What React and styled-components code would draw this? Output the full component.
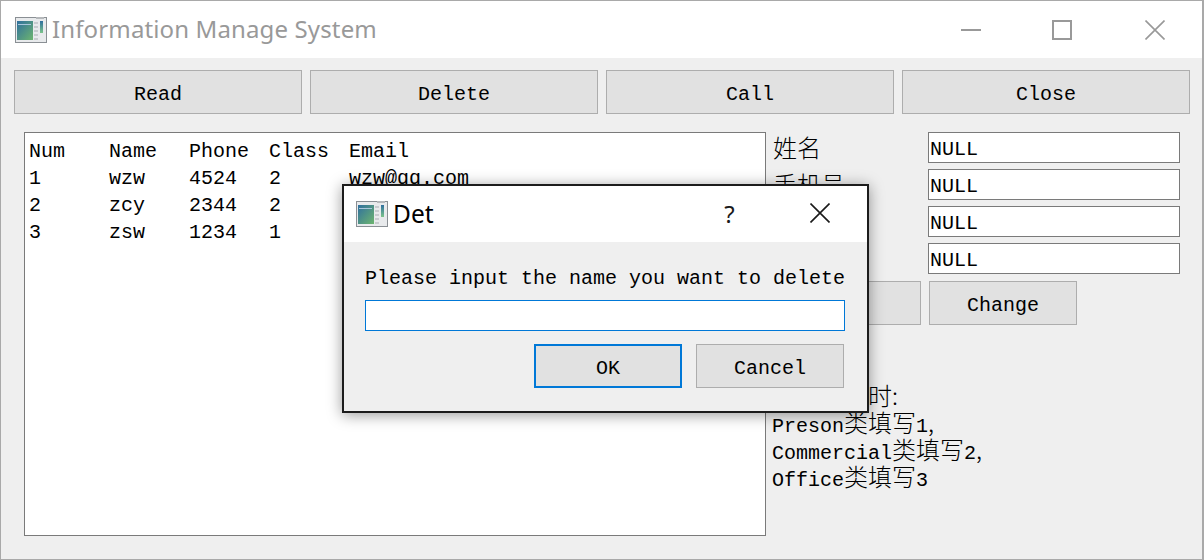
import React from 'react';
import styled, { createGlobalStyle } from 'styled-components';

const GlobalStyle = createGlobalStyle`
  html, body {
    margin: 0;
    padding: 0;
    background: #efefef;
  }
  * {
    box-sizing: border-box;
  }
`;

const mono = `"Liberation Mono", "Noto Sans CJK SC", monospace`;
const ui = `"Noto Sans", "Open Sans", sans-serif`;

const Janela = styled.div`
  position: relative;
  width: 1204px;
  height: 560px;
  background: #efefef;
  border: 1px solid #a9a9a9;
  border-right-width: 2px;
  overflow: hidden;
  font-family: ${mono};
  font-size: 20px;
  color: #000;
`;

const BarraTitulo = styled.div`
  display: flex;
  align-items: center;
  height: 57px;
  background: #fff;
  padding-left: 14px;
`;

const TituloJanela = styled.div`
  flex: 1;
  margin: -2px 0 0 5px;
  font-family: ${ui};
  font-size: 24px;
  letter-spacing: 0.13px;
  color: #999;
  white-space: nowrap;
`;

const BotaoJanela = styled.div`
  display: flex;
  align-items: center;
  justify-content: center;
  width: 92px;
  height: 57px;
  padding-right: ${p => p.$folga || 3}px;
`;

const Corpo = styled.div`
  display: flex;
  flex-direction: column;
  padding: 12px 12px 0 13px;
`;

const BarraBotoes = styled.div`
  display: flex;
  gap: 8px;
`;

const Botao = styled.div`
  display: flex;
  align-items: center;
  justify-content: center;
  flex: ${p => (p.$largo ? '1' : 'none')};
  width: ${p => (p.$largo ? 'auto' : '148px')};
  height: 44px;
  background: #e1e1e1;
  border: ${p => (p.$foco ? '2px solid #0078d7' : '1px solid #adadad')};
  padding-top: 4px;
`;

const Conteudo = styled.div`
  display: flex;
  margin-top: 18px;
  padding-left: 10px;
`;

const AreaTexto = styled.div`
  width: 742px;
  height: 404px;
  flex: none;
  background: #fff;
  border: 1px solid #7a7a7a;
  padding: 5px 4px;
  line-height: 27px;
`;

const Linha = styled.div`
  display: grid;
  grid-template-columns: repeat(4, 80px) auto;
  height: 27px;
`;

const Lateral = styled.div`
  display: flex;
  flex-direction: column;
  width: 414px;
  padding-left: 7px;
`;

const Campo = styled.div`
  display: flex;
  align-items: center;
  height: 31px;
  margin-bottom: 6px;
`;

const Rotulo = styled.div`
  width: 155px;
  flex: none;
  padding-top: 2px;
`;

const Entrada = styled.div`
  width: 252px;
  height: 31px;
  background: #fff;
  border: 1px solid #7a7a7a;
  padding-left: 1px;
  line-height: 34px;
`;

const LinhaBotoes = styled.div`
  display: flex;
  gap: 8px;
  margin-top: 1px;
`;

const Observacao = styled.div`
  margin: 58px 0 0 -1px;
`;

const LinhaObservacao = styled.div`
  height: 27px;
  line-height: 27px;
  padding-left: ${p => p.$recuo || 0}px;
  white-space: nowrap;
`;

const Han = styled.span`
  font-family: "Noto Sans CJK SC", sans-serif;
  font-size: 24px;
  font-weight: 300;
  line-height: 1;
`;

const Dialogo = styled.div`
  position: absolute;
  left: 341px;
  top: 183px;
  width: 527px;
  height: 229px;
  background: #efefef;
  border: 2px solid #1c1c1c;
  box-shadow: 0 2px 14px rgba(0, 0, 0, 0.4);
`;

const BarraDialogo = styled.div`
  display: flex;
  align-items: center;
  height: 56px;
  background: #fff;
  padding-left: 12px;
`;

const TituloDialogo = styled.div`
  flex: 1;
  margin: -2px 0 0 5px;
  font-family: ${ui};
  font-size: 24.5px;
  color: #000;
`;

const Ajuda = styled.div`
  width: 92px;
  margin: -2px 0 0 0;
  padding-right: 3px;
  text-align: center;
  font-family: ${ui};
  font-size: 24px;
  color: #1a1a1a;
`;

const FecharDialogo = styled.div`
  display: flex;
  align-items: center;
  justify-content: center;
  width: 90px;
  padding: 0 5px 2px 0;
`;

const CorpoDialogo = styled.div`
  display: flex;
  flex-direction: column;
  padding: 22px 21px 0 21px;
`;

const Pergunta = styled.div`
  height: 36px;
  line-height: 29px;
  white-space: nowrap;
`;

const EntradaDialogo = styled.div`
  width: 480px;
  height: 31px;
  background: #fff;
  border: 1px solid #0078d7;
`;

const AcoesDialogo = styled.div`
  display: flex;
  justify-content: flex-end;
  gap: 14px;
  margin-top: 13px;
  padding-right: 2px;
`;

const IconeApp = () => (
  <svg width="32" height="26" viewBox="0 0 32 26" style={{ flex: 'none' }}>
    <defs>
      <linearGradient id="tela" x1="0" y1="0" x2="1" y2="1">
        <stop offset="0" stopColor="#2f6f9e" />
        <stop offset="1" stopColor="#6db56f" />
      </linearGradient>
      <linearGradient id="faixa" x1="0" y1="0" x2="0" y2="1">
        <stop offset="0" stopColor="#2f6f9e" />
        <stop offset="1" stopColor="#7cc48a" />
      </linearGradient>
    </defs>
    <rect x="0.5" y="0.5" width="31" height="25" fill="#e8eaec" stroke="#8a8f94" />
    <rect x="21" y="0" width="8" height="2" fill="#b5b8bb" />
    <rect x="2" y="4" width="16" height="19" fill="url(#tela)" />
    <rect x="3" y="7" width="13" height="1" fill="#a9c6dc" />
    <rect x="25" y="4" width="3" height="12" fill="url(#faixa)" />
    <path d="M19 6h4M19 10h4M19 14h4M19 18h4M19 22h4" stroke="#a8adb2" strokeWidth="1" />
  </svg>
);

const Xis = ({ cor, tamanho }) => (
  <svg width={tamanho} height={tamanho} viewBox="0 0 20 20">
    <path d="M0.5 0.5L19.5 19.5M19.5 0.5L0.5 19.5" stroke={cor} strokeWidth="1.6" fill="none" />
  </svg>
);

const linhas = [
  ['Num', 'Name', 'Phone', 'Class', 'Email'],
  ['1', 'wzw', '4524', '2', 'wzw@qq.com'],
  ['2', 'zcy', '2344', '2', ''],
  ['3', 'zsw', '1234', '1', ''],
];

const App = () => (
  <Janela>
    <GlobalStyle />
    <BarraTitulo>
      <IconeApp />
      <TituloJanela>Information Manage System</TituloJanela>
      <BotaoJanela>
        <svg width="20" height="2" viewBox="0 0 20 2">
          <rect width="20" height="2" fill="#999" />
        </svg>
      </BotaoJanela>
      <BotaoJanela $folga={5}>
        <svg width="20" height="20" viewBox="0 0 20 20">
          <rect x="1" y="1" width="18" height="18" fill="none" stroke="#999" strokeWidth="2" />
        </svg>
      </BotaoJanela>
      <BotaoJanela>
        <Xis cor="#999" tamanho={20} />
      </BotaoJanela>
    </BarraTitulo>
    <Corpo>
      <BarraBotoes>
        <Botao $largo>Read</Botao>
        <Botao $largo>Delete</Botao>
        <Botao $largo>Call</Botao>
        <Botao $largo>Close</Botao>
      </BarraBotoes>
      <Conteudo>
        <AreaTexto>
          {linhas.map(linha => (
            <Linha key={linha[0]}>
              {linha.map((celula, i) => (
                <span key={i}>{celula}</span>
              ))}
            </Linha>
          ))}
        </AreaTexto>
        <Lateral>
          <Campo>
            <Rotulo><Han>姓名</Han></Rotulo>
            <Entrada>NULL</Entrada>
          </Campo>
          <Campo>
            <Rotulo><Han>手机号</Han></Rotulo>
            <Entrada>NULL</Entrada>
          </Campo>
          <Campo>
            <Rotulo />
            <Entrada>NULL</Entrada>
          </Campo>
          <Campo>
            <Rotulo />
            <Entrada>NULL</Entrada>
          </Campo>
          <LinhaBotoes>
            <Botao />
            <Botao>Change</Botao>
          </LinhaBotoes>
          <Observacao>
            <LinhaObservacao $recuo={96}><Han>时:</Han></LinhaObservacao>
            <LinhaObservacao>Preson<Han>类填写</Han>1<Han>,</Han></LinhaObservacao>
            <LinhaObservacao>Commercial<Han>类填写</Han>2<Han>,</Han></LinhaObservacao>
            <LinhaObservacao>Office<Han>类填写</Han>3</LinhaObservacao>
          </Observacao>
        </Lateral>
      </Conteudo>
    </Corpo>
    <Dialogo>
      <BarraDialogo>
        <IconeApp />
        <TituloDialogo>Det</TituloDialogo>
        <Ajuda>?</Ajuda>
        <FecharDialogo>
          <Xis cor="#1a1a1a" tamanho={20} />
        </FecharDialogo>
      </BarraDialogo>
      <CorpoDialogo>
        <Pergunta>Please input the name you want to delete</Pergunta>
        <EntradaDialogo />
        <AcoesDialogo>
          <Botao $foco>OK</Botao>
          <Botao>Cancel</Botao>
        </AcoesDialogo>
      </CorpoDialogo>
    </Dialogo>
  </Janela>
);

export default App;
